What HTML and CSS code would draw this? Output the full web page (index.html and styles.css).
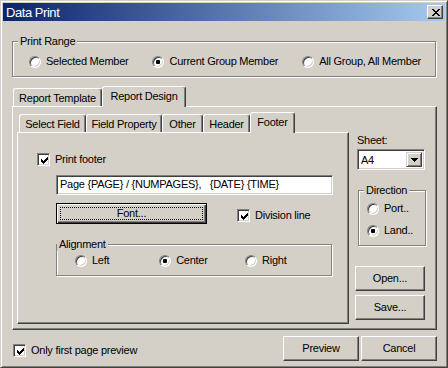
FILE: index.html
```html
<!DOCTYPE html>
<html lang="en">
<head>
	<meta charset="UTF-8">
	<title>Data Print</title>
	<link rel="stylesheet" href="styles.css">
</head>
<body>
	<div class="window">
		<div class="titlebar">
			<span class="title">Data Print</span>
			<span class="close"><svg width="8" height="7" viewBox="0 0 8 7" shape-rendering="crispEdges"><path d="M0 0h2v1H0zM6 0h2v1H6zM1 1h2v1H1zM5 1h2v1H5zM2 2h4v1H2zM3 3h2v1H3zM2 4h4v1H2zM1 5h2v1H1zM5 5h2v1H5zM0 6h2v1H0zM6 6h2v1H6z"/></svg></span>
		</div>
		<div class="client">
			<fieldset class="group range">
				<legend>Print Range</legend>
				<div class="opts">
					<label class="opt"><span class="radio"></span>Selected Member</label>
					<label class="opt"><span class="radio on"></span>Current Group Member</label>
					<label class="opt"><span class="radio"></span>All Group, All Member</label>
				</div>
			</fieldset>

			<div class="tabctl outer">
				<div class="tabstrip">
					<span class="tab t-template">Report Template</span>
					<span class="tab active t-design">Report Design</span>
				</div>
				<div class="panel outer-panel">
					<div class="tabctl inner">
						<div class="tabstrip">
							<span class="tab t-select">Select Field</span>
							<span class="tab t-prop">Field Property</span>
							<span class="tab t-other">Other</span>
							<span class="tab t-header">Header</span>
							<span class="tab active t-footer">Footer</span>
						</div>
						<div class="panel inner-panel">
							<label class="opt"><span class="check"><svg width="7" height="7" viewBox="0 0 7 7" shape-rendering="crispEdges"><path d="M6 0h1v1H6zM5 1h2v1H5zM0 2h1v1H0zM4 2h3v1H4zM0 3h2v1H0zM3 3h3v1H3zM0 4h5v1H0zM1 5h3v1H1zM2 6h1v1H2z"/></svg></span>Print footer</label>
							<div class="field">Page {PAGE} / {NUMPAGES},   {DATE} {TIME}</div>
							<div class="font-row">
								<button class="btn default"><span class="focus">Font...</span></button>
								<label class="opt division"><span class="check"><svg width="7" height="7" viewBox="0 0 7 7" shape-rendering="crispEdges"><path d="M6 0h1v1H6zM5 1h2v1H5zM0 2h1v1H0zM4 2h3v1H4zM0 3h2v1H0zM3 3h3v1H3zM0 4h5v1H0zM1 5h3v1H1zM2 6h1v1H2z"/></svg></span>Division line</label>
							</div>
							<fieldset class="group align">
								<legend>Alignment</legend>
								<div class="opts">
									<label class="opt"><span class="radio"></span>Left</label>
									<label class="opt"><span class="radio on"></span>Center</label>
									<label class="opt"><span class="radio"></span>Right</label>
								</div>
							</fieldset>
						</div>
					</div>
					<div class="side">
						<div class="sheet-label">Sheet:</div>
						<div class="combo">
							<span class="combo-text">A4</span>
							<span class="combo-btn"><svg width="7" height="4" viewBox="0 0 7 4" shape-rendering="crispEdges"><path d="M0 0h7v1H0zM1 1h5v1H1zM2 2h3v1H2zM3 3h1v1H3z"/></svg></span>
						</div>
						<fieldset class="group direction">
							<legend>Direction</legend>
							<div class="opts">
								<label class="opt"><span class="radio"></span>Port..</label>
								<label class="opt"><span class="radio on"></span>Land..</label>
							</div>
						</fieldset>
						<button class="btn side-btn open-btn">Open...</button>
						<button class="btn side-btn save-btn">Save...</button>
					</div>
				</div>
			</div>

			<div class="bottom">
				<label class="opt first-only"><span class="check"><svg width="7" height="7" viewBox="0 0 7 7" shape-rendering="crispEdges"><path d="M6 0h1v1H6zM5 1h2v1H5zM0 2h1v1H0zM4 2h3v1H4zM0 3h2v1H0zM3 3h3v1H3zM0 4h5v1H0zM1 5h3v1H1zM2 6h1v1H2z"/></svg></span>Only first page preview</label>
				<button class="btn wide">Preview</button>
				<button class="btn wide cancel-btn">Cancel</button>
			</div>
		</div>
	</div>
</body>
</html>
```

FILE: styles.css
```css
*{
	box-sizing: border-box;
}
body{
	margin: 0;
	font: 11px/13px "Liberation Sans", Arial, sans-serif;
	letter-spacing: -0.25px;
	color: #000;
	background: #d4d0c8;
}
.window{
	width: 448px;
	height: 368px;
	padding: 2px;
	background: #d4d0c8;
	border: 1px solid;
	border-color: #d4d0c8 #404040 #404040 #d4d0c8;
	box-shadow: inset 1px 1px 0 #fff, inset -1px -1px 0 #808080;
}

/* title bar */
.titlebar{
	display: flex;
	align-items: center;
	justify-content: space-between;
	height: 18px;
	padding: 0 2px 0 3px;
	background: linear-gradient(to right, #0a246a, #a6caf0);
}
.title{
	color: #fff;
	font-size: 13px;
	line-height: 15px;
	letter-spacing: -0.45px;
	padding-top: 1px;
}
.close{
	display: flex;
	width: 16px;
	height: 14px;
	padding: 3px 0 0 4px;
	background: #d4d0c8;
	border: 1px solid;
	border-color: #fff #404040 #404040 #fff;
	box-shadow: inset -1px -1px 0 #808080;
}
.close svg{
	display: block;
}

.client{
	padding: 14px 8px 0 9px;
}

/* group boxes */
.group{
	margin: 0;
	padding: 0;
	min-width: 0;
	border: 1px solid #808080;
	box-shadow: 1px 1px 0 #fff, inset 1px 1px 0 #fff;
}
.group legend{
	margin-left: 5px;
	padding: 0 2px;
	line-height: 13px;
	background: #d4d0c8;
}
.opts{
	display: flex;
}
.opt{
	display: flex;
	align-items: center;
	gap: 5px;
	height: 13px;
	white-space: nowrap;
}
.radio{
	position: relative;
	flex: none;
	width: 12px;
	height: 12px;
	border-radius: 50%;
	background: #fff;
	border: 1px solid;
	border-color: #808080 #fff #fff #808080;
	box-shadow: inset 1px 1px 0 #404040, inset -1px -1px 0 #d4d0c8;
}
.radio.on::after{
	content: '';
	position: absolute;
	left: 3px;
	top: 3px;
	width: 4px;
	height: 4px;
	border-radius: 1px;
	background: #000;
}
.check{
	flex: none;
	width: 13px;
	height: 13px;
	padding: 2px;
	background: #fff;
	border: 1px solid;
	border-color: #808080 #fff #fff #808080;
	box-shadow: inset 1px 1px 0 #404040, inset -1px -1px 0 #d4d0c8;
}
.check svg{
	display: block;
	margin: 1px;
}

.range{
	width: 424px;
}
.range .opts{
	gap: 24px;
	padding: 7px 0 8px 16px;
}

/* tabs */
.outer{
	margin-top: 9px;
}
.tabstrip{
	display: flex;
	align-items: flex-end;
	height: 20px;
}
.outer .tabstrip{
	padding-left: 1px;
}
.inner .tabstrip{
	padding-left: 2px;
}
.tab{
	height: 18px;
	padding-top: 3px;
	text-align: center;
	white-space: nowrap;
	border: 1px solid;
	border-bottom: 0;
	border-color: #fff #404040 transparent #fff;
	border-radius: 3px 3px 0 0;
	box-shadow: inset -1px 0 0 #808080;
}
.tab.active{
	position: relative;
	z-index: 1;
	height: 21px;
	margin-bottom: -1px;
	background: #d4d0c8;
}
.t-template{ width: 89px; }
.t-design{ width: 84px; }
.t-select{ width: 67px; }
.t-prop{ width: 76px; }
.t-other{ width: 41px; }
.t-header{ width: 47px; }
.t-footer{ width: 45px; }

.panel{
	border: 1px solid;
	border-color: #fff #404040 #404040 #fff;
	box-shadow: inset -1px -1px 0 #808080;
}
.outer-panel{
	display: flex;
	align-items: flex-start;
	height: 224px;
	padding: 5px 0 0 4px;
}
.inner-panel{
	width: 332px;
	height: 192px;
	padding: 20px 0 0 19px;
}

/* footer page */
.field{
	width: 277px;
	height: 20px;
	margin: 9px 0 0 19px;
	padding: 2px 3px;
	white-space: pre;
	background: #fff;
	border: 1px solid;
	border-color: #808080 #fff #fff #808080;
	box-shadow: inset 1px 1px 0 #404040, inset -1px -1px 0 #d4d0c8;
}
.font-row{
	display: flex;
	align-items: flex-start;
	margin: 8px 0 0 19px;
}
.btn{
	display: flex;
	align-items: center;
	justify-content: center;
	margin: 0;
	padding: 0;
	font: inherit;
	letter-spacing: inherit;
	color: #000;
	background: #d4d0c8;
	border: 1px solid;
	border-color: #fff #404040 #404040 #fff;
	box-shadow: inset -1px -1px 0 #808080;
}
.btn.default{
	width: 151px;
	height: 21px;
	padding: 3px;
	border-color: #000;
	box-shadow: inset 1px 1px 0 #fff, inset -1px -1px 0 #404040, inset -2px -2px 0 #808080;
}
.focus{
	flex: 1;
	align-self: stretch;
	display: flex;
	align-items: center;
	justify-content: center;
	border: 1px dotted #000;
}
.division{
	margin: 6px 0 0 30px;
}
.align{
	width: 276px;
	margin: 14px 0 0 19px;
}
.align legend{
	margin-left: 0;
}
.align .opts{
	padding: 3px 0 8px 18px;
}
.align .opt{
	width: 93px;
}
.align .opt + .opt{
	width: 95px;
}

/* right column */
.side{
	display: flex;
	flex-direction: column;
	width: 72px;
	margin-left: 6px;
}
.sheet-label{
	margin: 22px 0 0 2px;
}
.combo{
	display: flex;
	width: 68px;
	height: 21px;
	margin: 2px 0 0 2px;
	padding: 2px;
	background: #fff;
	border: 1px solid;
	border-color: #808080 #fff #fff #808080;
	box-shadow: inset 1px 1px 0 #404040, inset -1px -1px 0 #d4d0c8;
}
.combo-text{
	flex: 1;
	padding: 2px 0 0 1px;
}
.combo-btn{
	display: flex;
	align-items: center;
	justify-content: center;
	width: 16px;
	background: #d4d0c8;
	border: 1px solid;
	border-color: #d4d0c8 #404040 #404040 #d4d0c8;
	box-shadow: inset 1px 1px 0 #fff, inset -1px -1px 0 #808080;
}
.combo-btn svg{
	display: block;
}
.direction{
	width: 68px;
	margin: 14px 0 0 3px;
}
.direction .opts{
	flex-direction: column;
	gap: 9px;
	padding: 5px 0 8px 8px;
}
.side-btn{
	width: 70px;
	height: 25px;
}
.open-btn{
	margin-top: 20px;
}
.save-btn{
	margin-top: 4px;
}

/* bottom row */
.bottom{
	display: flex;
	align-items: flex-start;
	margin-top: 6px;
}
.first-only{
	margin: 8px auto 0 1px;
}
.wide{
	width: 76px;
	height: 25px;
}
.cancel-btn{
	margin-left: 2px;
}
```
